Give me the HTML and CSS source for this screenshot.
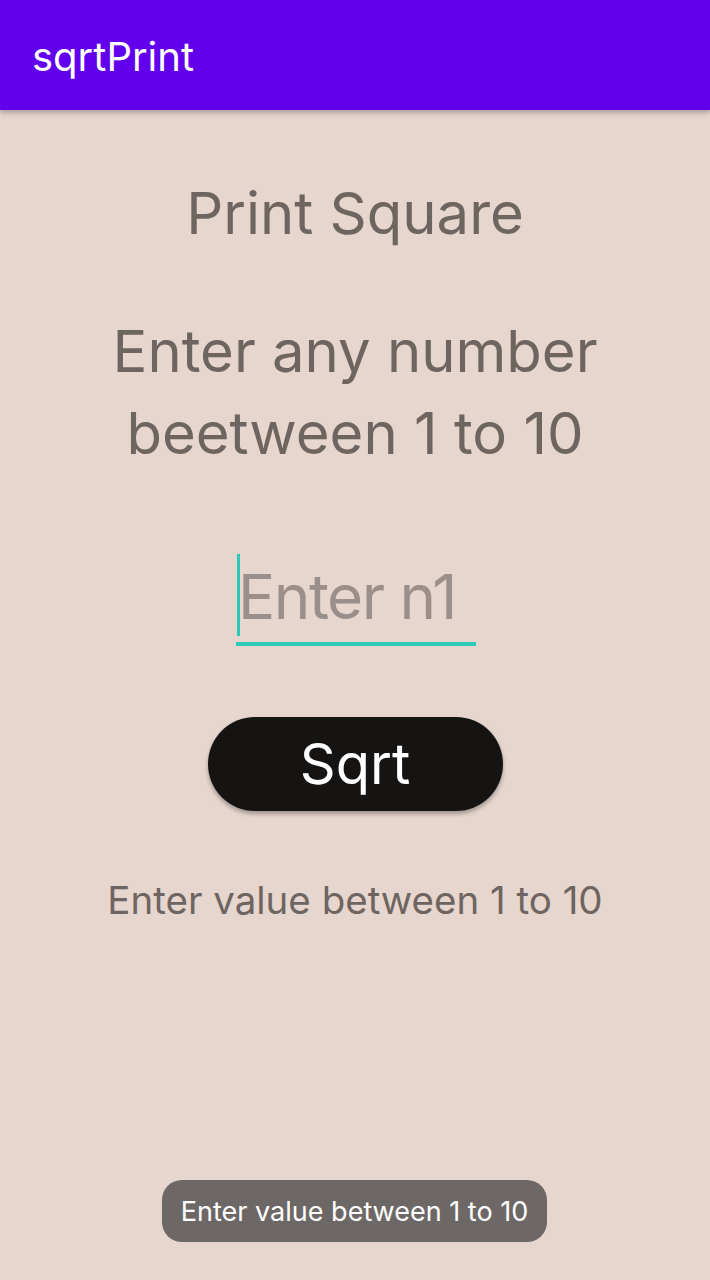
FILE: index.html
```html
<!DOCTYPE html>
<html>
<head>
<meta charset="utf-8">
<link rel="stylesheet" href="styles.css">
</head>
<body>
<header class="appbar"><span class="appbar-title">sqrtPrint</span></header>
<main class="content">
  <h1 class="title">Print Square</h1>
  <p class="prompt">Enter any number<br>beetween 1 to 10</p>
  <div class="field">
    <span class="cursor"></span>
    <span class="placeholder">Enter n1</span>
  </div>
  <button class="btn">Sqrt</button>
  <p class="result">Enter value between 1 to 10</p>
</main>
<div class="toast">Enter value between 1 to 10</div>
</body>
</html>
```
FILE: styles.css
```css
html, body {
  margin: 0;
  padding: 0;
}
body {
  width: 710px;
  height: 1280px;
  background: #e6d6ce;
  font-family: Inter, "Noto Sans", sans-serif;
  position: relative;
  overflow: hidden;
}
.appbar {
  height: 110px;
  background: #6200ee;
  display: flex;
  align-items: center;
  padding-left: 32px;
  box-shadow: 0 3px 5px rgba(0,0,0,0.25);
  position: relative;
  z-index: 1;
}
.appbar-title {
  color: #fff;
  font-size: 40px;
  letter-spacing: 0;
  margin-top: 2px;
}
.content {
  display: flex;
  flex-direction: column;
  align-items: center;
}
.title {
  margin: 67px 0 0;
  font-weight: 400;
  font-size: 58px;
  line-height: 72px;
  color: #6e6561;
}
.prompt {
  margin: 61px 0 0;
  font-size: 58px;
  line-height: 82px;
  text-align: center;
  color: #6e6561;
}
.field {
  margin-top: 80px;
  width: 240px;
  height: 88px;
  border-bottom: 4px solid #2cc9b8;
  display: flex;
  align-items: flex-end;
  position: relative;
  margin-left: 2px;
}
.cursor {
  width: 3px;
  height: 82px;
  background: #2cc9b8;
  margin-bottom: 6px;
  margin-left: 1px;
}
.placeholder {
  font-size: 62px;
  line-height: 82px;
  color: #9a8f8b;
  margin-bottom: 4px;
  margin-left: -2px;
  letter-spacing: -1.5px;
}
.btn {
  margin-top: 71px;
  width: 295px;
  height: 94px;
  border: none;
  border-radius: 47px;
  background: #161412;
  color: #fff;
  font-family: Inter, "Noto Sans", sans-serif;
  font-size: 56px;
  box-shadow: 0 3px 4px rgba(0,0,0,0.3);
  padding: 0;
}
.result {
  margin: 66px 0 0;
  font-size: 38.5px;
  line-height: 46px;
  color: #6e6561;
}
.toast {
  position: absolute;
  left: 162px;
  top: 1180px;
  width: 385px;
  height: 62px;
  border-radius: 20px;
  background: #6d6865;
  color: #fff;
  font-size: 27px;
  display: flex;
  align-items: center;
  justify-content: center;
}
```
